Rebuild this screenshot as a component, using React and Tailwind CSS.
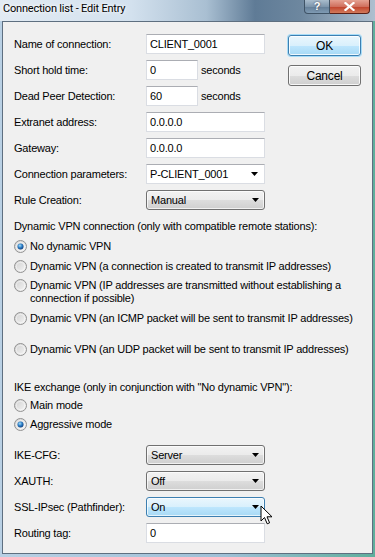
import React from "react";

const font = "font-['Liberation_Sans',Arial,sans-serif]";

function Arrow() {
  return (
    <svg width="7" height="4" viewBox="0 0 7 4" className="shrink-0">
      <polygon points="0,0 7,0 3.5,4" fill="#000" />
    </svg>
  );
}

function TextBox({ value, w = "w-[119px]" }) {
  return (
    <div className={`${w} h-[20px] bg-white border border-[#dadde3] border-t-[#abadb3] flex items-center pl-[3px]`}>
      {value}
    </div>
  );
}

function EditCombo({ value }) {
  return (
    <div className="w-[119px] h-[20px] bg-white border border-[#dadde3] border-t-[#abadb3] flex items-center pl-[3px] pr-[6px] justify-between">
      <span>{value}</span>
      <Arrow />
    </div>
  );
}

function Combo({ value, hot }) {
  const look = hot
    ? "border-[#3c7fb1] bg-[linear-gradient(#eaf6fd_0%,#d9f0fc_50%,#bee6fd_51%,#a7d9f5_100%)]"
    : "border-[#707070] bg-[linear-gradient(#f2f2f2_0%,#ebebeb_50%,#dddddd_51%,#cfcfcf_100%)]";
  return (
    <div className={`w-[119px] h-[20px] rounded-[3px] border ${look} shadow-[inset_0_0_0_1px_rgba(255,255,255,0.7)] flex items-center pl-[4px] pr-[5px] justify-between`}>
      <span>{value}</span>
      <Arrow />
    </div>
  );
}

function Radio({ checked }) {
  return (
    <svg width="13" height="13" viewBox="0 0 13 13" className="shrink-0">
      <defs>
        <linearGradient id="rbg" x1="0" y1="0" x2="1" y2="1">
          <stop offset="0" stopColor="#cfcfcf" />
          <stop offset="1" stopColor="#f6f6f6" />
        </linearGradient>
        <radialGradient id="rdot" cx="0.4" cy="0.35" r="0.7">
          <stop offset="0" stopColor="#a9dcf6" />
          <stop offset="0.5" stopColor="#2d80c8" />
          <stop offset="1" stopColor="#0d3a7a" />
        </radialGradient>
      </defs>
      <circle cx="6.5" cy="6.5" r="6" fill="url(#rbg)" stroke="#929292" strokeWidth="1" />
      <circle cx="6.5" cy="6.5" r="4.2" fill="none" stroke="#ffffff" strokeOpacity="0.6" strokeWidth="0.8" />
      {checked && <circle cx="6.5" cy="6.5" r="3" fill="url(#rdot)" />}
    </svg>
  );
}

function RadioRow({ checked, children, className = "" }) {
  return (
    <div className={`flex items-start gap-[3px] leading-[13px] ${className}`}>
      <Radio checked={checked} />
      <span>{children}</span>
    </div>
  );
}

function Row({ label, children }) {
  return (
    <div className="flex items-center h-[20px]">
      <div className="w-[132px] shrink-0">{label}</div>
      {children}
    </div>
  );
}

function Button({ children, def }) {
  const look = def
    ? "border-[#3c7fb1] shadow-[0_0_0_1px_#a6dcf8,inset_0_0_0_1px_rgba(255,255,255,0.8)] bg-[linear-gradient(#eaf6fd_0%,#d9f0fc_50%,#bee6fd_51%,#a7d9f5_100%)]"
    : "border-[#707070] shadow-[inset_0_0_0_1px_rgba(255,255,255,0.8)] bg-[linear-gradient(#f2f2f2_0%,#ebebeb_50%,#dddddd_51%,#cfcfcf_100%)]";
  return (
    <div className={`h-[21px] w-[73px] rounded-[3px] border ${look} flex items-center justify-center text-[12px]`}>
      {children}
    </div>
  );
}

function Cursor() {
  return (
    <svg width="14" height="21" viewBox="0 0 14 21" className="absolute left-[260px] top-[505px]">
      <path d="M1 1 L1 16 L4.5 12.5 L7.2 18.8 L9.6 17.8 L7 11.8 L12 11.8 Z" fill="#fff" stroke="#000" strokeWidth="1" strokeLinejoin="miter" />
    </svg>
  );
}

export default function App() {
  return (
    <div className={`${font} relative w-[375px] h-[557px] overflow-hidden text-[11px] tracking-[-0.2px] text-black bg-[linear-gradient(90deg,#b9d0e4_0%,#9fc0d6_60%,#5fae9c_100%)]`}>
      {/* Title bar */}
      <div className="h-[21px] flex items-start bg-[linear-gradient(90deg,#e2ebf3_0%,#d3e1ee_35%,#a9bfd2_55%,#5f7b96_68%,#6d879f_80%,#aebfcf_100%)]">
        <div className="pl-[3px] pt-[2px] font-['Roboto',Arial,sans-serif] text-[11px] tracking-[-0.2px] leading-[14px] [text-shadow:0_0_6px_#fff,0_0_3px_#fff]">
          Connection list - Edit Entry
        </div>
        <div className="ml-auto mr-[5px] flex">
          <div className="w-[26px] h-[14px] rounded-bl-[4px] border border-t-0 border-[#3f5366] bg-[linear-gradient(#a9bccc_0%,#7f97ad_50%,#647e97_51%,#7f9bb4_100%)] flex items-center justify-center text-white font-bold text-[11px] leading-none [text-shadow:0_0_2px_#334]">
            ?
          </div>
          <div className="w-[40px] h-[14px] rounded-br-[4px] border border-t-0 border-l-0 border-[#5a2017] bg-[linear-gradient(#e5a293_0%,#d0705e_50%,#c0402a_51%,#d27a5a_100%)] flex items-center justify-center">
            <svg width="11" height="9" viewBox="0 0 11 9">
              <path d="M1.5 1 L9.5 8 M9.5 1 L1.5 8" stroke="#fff" strokeWidth="2.2" strokeLinecap="square" />
            </svg>
          </div>
        </div>
      </div>

      {/* Client area */}
      <div className="ml-[2px] w-[371px] h-[533px] border border-[#5e6f80] bg-[#f0f0f0] pl-[11px] pt-[12px]">
        <div className="flex">
          <div className="w-[251px] flex flex-col gap-[6px]">
            <Row label="Name of connection:">
              <TextBox value="CLIENT_0001" />
            </Row>
            <Row label="Short hold time:">
              <TextBox value="0" w="w-[52px]" />
              <span className="ml-[3px]">seconds</span>
            </Row>
            <Row label="Dead Peer Detection:">
              <TextBox value="60" w="w-[52px]" />
              <span className="ml-[3px]">seconds</span>
            </Row>
            <Row label="Extranet address:">
              <TextBox value="0.0.0.0" />
            </Row>
            <Row label="Gateway:">
              <TextBox value="0.0.0.0" />
            </Row>
            <Row label="Connection parameters:">
              <EditCombo value="P-CLIENT_0001" />
            </Row>
            <Row label="Rule Creation:">
              <Combo value="Manual" />
            </Row>
          </div>
          <div className="ml-[23px] flex flex-col gap-[9px] pt-[1px]">
            <Button def>OK</Button>
            <Button>Cancel</Button>
          </div>
        </div>

        <div className="mt-[10px] leading-[13px]">
          Dynamic VPN connection (only with compatible remote stations):
        </div>
        <RadioRow checked className="mt-[7px]">No dynamic VPN</RadioRow>
        <RadioRow className="mt-[7px]">Dynamic VPN (a connection is created to transmit IP addresses)</RadioRow>
        <RadioRow className="mt-[6px]">
          Dynamic VPN (IP addresses are transmitted without establishing a
          <br />
          connection if possible)
        </RadioRow>
        <RadioRow className="mt-[7px]">Dynamic VPN (an ICMP packet will be sent to transmit IP addresses)</RadioRow>
        <RadioRow className="mt-[18px]">Dynamic VPN (an UDP packet will be sent to transmit IP addresses)</RadioRow>

        <div className="mt-[25px] leading-[13px]">
          IKE exchange (only in conjunction with "No dynamic VPN"):
        </div>
        <RadioRow className="mt-[5px]">Main mode</RadioRow>
        <RadioRow checked className="mt-[6px]">Aggressive mode</RadioRow>

        <div className="mt-[14px] w-[251px] flex flex-col gap-[6px]">
          <Row label="IKE-CFG:">
            <Combo value="Server" />
          </Row>
          <Row label="XAUTH:">
            <Combo value="Off" />
          </Row>
          <Row label="SSL-IPsec (Pathfinder):">
            <Combo value="On" hot />
          </Row>
          <Row label="Routing tag:">
            <TextBox value="0" />
          </Row>
        </div>
      </div>

      <Cursor />
    </div>
  );
}
